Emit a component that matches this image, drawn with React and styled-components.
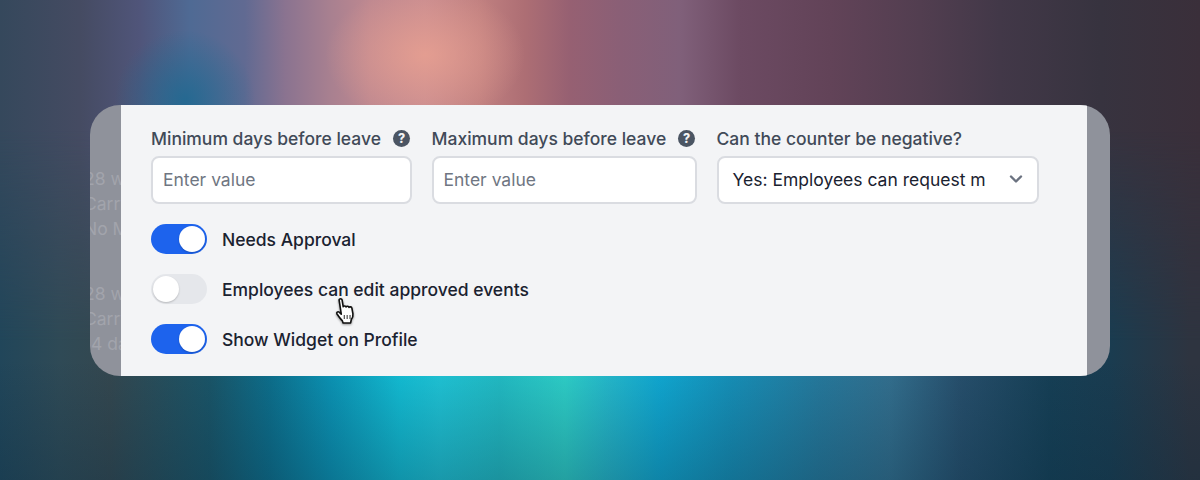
import React from "react";
import styled, { createGlobalStyle } from "styled-components";

const GlobalStyle = createGlobalStyle`
	html, body {
		margin: 0;
		padding: 0;
		background: #23303c;
	}
	* {
		box-sizing: border-box;
	}
`;

const Stage = styled.div`
	position: relative;
	width: 1200px;
	height: 480px;
	overflow: hidden;
	padding: 105px 90px 0;
	font-family: Inter, "Liberation Sans", sans-serif;
	background:
		linear-gradient(180deg, rgba(8, 40, 60, 0) 75%, rgba(8, 40, 60, 0.28) 100%),
		linear-gradient(
			90deg,
			#21465a 0,
			#2f4a56 60px,
			#34474f 110px,
			#1a5568 210px,
			#0d6f8c 270px,
			#0b93b4 330px,
			#13bdd4 400px,
			#1fc4d6 440px,
			#22bcc4 500px,
			#2ecfc8 565px,
			#24b8cc 610px,
			#10a8d2 660px,
			#1690b8 730px,
			#26799c 820px,
			#336f8e 890px,
			#274f6c 960px,
			#163f55 1050px,
			#1a3c50 1110px,
			#2e3440 1190px
		);

	&::before {
		content: "";
		position: absolute;
		inset: 0;
		background:
			radial-gradient(ellipse 100px 70px at 425px 55px, rgba(232, 160, 145, 0.85) 0%, rgba(232, 160, 145, 0) 100%),
			radial-gradient(ellipse 70px 70px at 185px 100px, rgba(30, 105, 145, 0.85) 0%, rgba(30, 105, 145, 0) 100%),
			linear-gradient(
				90deg,
				#35485c 0,
				#454b62 80px,
				#50557a 140px,
				#4f6a94 190px,
				#616a92 245px,
				#8a7390 285px,
				#a88090 330px,
				#be8890 370px,
				#c88c90 425px,
				#c08080 480px,
				#ad6e74 525px,
				#966072 570px,
				#8a5f76 620px,
				#80607a 680px,
				#6c4a62 740px,
				#624358 830px,
				#523e50 920px,
				#423848 1000px,
				#37333f 1100px,
				#3a2f3a 1200px
			);
		mask-image: linear-gradient(180deg, #000 130px, transparent 340px);
	}
`;

const Card = styled.div`
	position: relative;
	display: flex;
	width: 1020px;
	height: 271px;
	border-radius: 30px;
	overflow: hidden;
	background: #8f929b;
`;

const SideStrip = styled.div`
	flex: none;
	width: ${(props) => props.$width}px;
	overflow: hidden;
	padding-top: 61px;
`;

const GhostGroup = styled.div`
	margin-bottom: 40px;
	margin-left: -6px;
	white-space: nowrap;
	font-size: 17.5px;
	line-height: 25px;
	color: #a2a4ac;
`;

const Panel = styled.div`
	position: relative;
	flex: 1;
	display: flex;
	flex-direction: column;
	gap: 20px;
	padding: 21px 30px 0;
	background: #f3f4f6;
`;

const FieldRow = styled.div`
	display: grid;
	grid-template-columns: 260.5px 265px 322px;
	column-gap: 20px;
`;

const Field = styled.div`
	display: flex;
	flex-direction: column;
	gap: 6px;
`;

const LabelRow = styled.div`
	display: flex;
	align-items: center;
	justify-content: space-between;
	padding-right: 1.5px;
	height: 24px;
`;

const Label = styled.label`
	font-size: 17.5px;
	font-weight: 450;
	color: #414a58;
	white-space: nowrap;
`;

const HelpBadge = styled.span`
	display: flex;
	width: 17px;
	height: 17px;
	align-items: center;
	justify-content: center;
	border-radius: 50%;
	background: #4b5563;
	color: #f3f4f6;
	font-size: 12.5px;
	font-weight: 800;
`;

const Input = styled.input`
	width: 100%;
	height: 48px;
	padding: 0 10px 2px;
	border: 2px solid #dadce1;
	border-radius: 8px;
	background: #fff;
	font-family: inherit;
	font-size: 17.5px;
	outline: none;
	&::placeholder {
		color: #6f7682;
		opacity: 1;
	}
`;

const SelectBox = styled.div`
	display: flex;
	align-items: center;
	justify-content: space-between;
	height: 48px;
	padding: 0 13px 2px 14px;
	border: 2px solid #dadce1;
	border-radius: 8px;
	background: #fff;
	font-size: 17.5px;
	color: #1a2230;
	white-space: nowrap;
`;

const ToggleList = styled.div`
	display: flex;
	flex-direction: column;
	gap: 20px;
`;

const ToggleRow = styled.div`
	display: flex;
	align-items: center;
	gap: 15px;
`;

const Track = styled.span`
	display: flex;
	justify-content: ${(props) => (props.$on ? "flex-end" : "flex-start")};
	align-items: center;
	width: 56px;
	height: 30px;
	padding: 2px;
	border-radius: 15px;
	background: ${(props) => (props.$on ? "#1d63ed" : "#e5e7eb")};
`;

const Thumb = styled.span`
	width: 26px;
	height: 26px;
	border-radius: 50%;
	background: #fff;
	box-shadow: 0 1px 2px rgba(0, 0, 0, 0.2);
`;

const ToggleLabel = styled.span`
	padding-top: 1px;
	font-size: 17.5px;
	font-weight: 450;
	color: #1a2230;
`;

const Cursor = styled.svg`
	position: absolute;
	left: 211px;
	top: 192px;
	width: 28px;
	height: 30px;
	filter: drop-shadow(0 1px 1px rgba(0, 0, 0, 0.4));
`;

const HelpIcon = () => <HelpBadge>?</HelpBadge>;

const Toggle = ({ on, children }) => (
	<ToggleRow>
		<Track $on={on}>
			<Thumb />
		</Track>
		<ToggleLabel>{children}</ToggleLabel>
	</ToggleRow>
);

const App = () => {
	return (
		<Stage>
			<GlobalStyle />
			<Card>
				<SideStrip $width={31}>
					<GhostGroup>
						28 weeks
						<br />
						Carry
						<br />
						No Max
					</GhostGroup>
					<GhostGroup>
						28 weeks
						<br />
						Carry
						<br />
						14 days
					</GhostGroup>
				</SideStrip>
				<Panel>
					<FieldRow>
						<Field>
							<LabelRow>
								<Label>Minimum days before leave</Label>
								<HelpIcon />
							</LabelRow>
							<Input placeholder="Enter value" />
						</Field>
						<Field>
							<LabelRow>
								<Label>Maximum days before leave</Label>
								<HelpIcon />
							</LabelRow>
							<Input placeholder="Enter value" />
						</Field>
						<Field>
							<LabelRow>
								<Label>Can the counter be negative?</Label>
							</LabelRow>
							<SelectBox>
								Yes: Employees can request m
								<svg width="16" height="16" viewBox="0 0 16 16" fill="none">
									<path d="M3 5.5 8 10.5 13 5.5" stroke="#6b7280" strokeWidth="2.4" strokeLinecap="round" strokeLinejoin="round" />
								</svg>
							</SelectBox>
						</Field>
					</FieldRow>
					<ToggleList>
						<Toggle on>Needs Approval</Toggle>
						<Toggle>Employees can edit approved events</Toggle>
						<Toggle on>Show Widget on Profile</Toggle>
					</ToggleList>
					<Cursor viewBox="0 0 24 26">
						<path
							d="M6 2.5c0-1.3 2.4-1.3 2.6 0l1 6c.4-1 2.2-1 2.5.2.4-1 2.2-.9 2.5.3.5-.8 2.2-.6 2.5.6l.9 5c.3 2-.3 3.4-1.4 4.9l-.6 3H9.5l-.7-2c-1.6-1.2-3-3.4-4.6-5.8-.8-1.3.7-2.5 1.9-1.5l1.8 1.7L6 2.5z"
							fill="#fff"
							stroke="#111"
							strokeWidth="1.4"
							strokeLinejoin="round"
						/>
						<path d="M10.5 15.5v3.5M13 15.5v3.5M15.5 15.5v3.5" stroke="#333" strokeWidth="0.9" />
					</Cursor>
				</Panel>
				<SideStrip $width={23} />
			</Card>
		</Stage>
	);
};

export default App;
